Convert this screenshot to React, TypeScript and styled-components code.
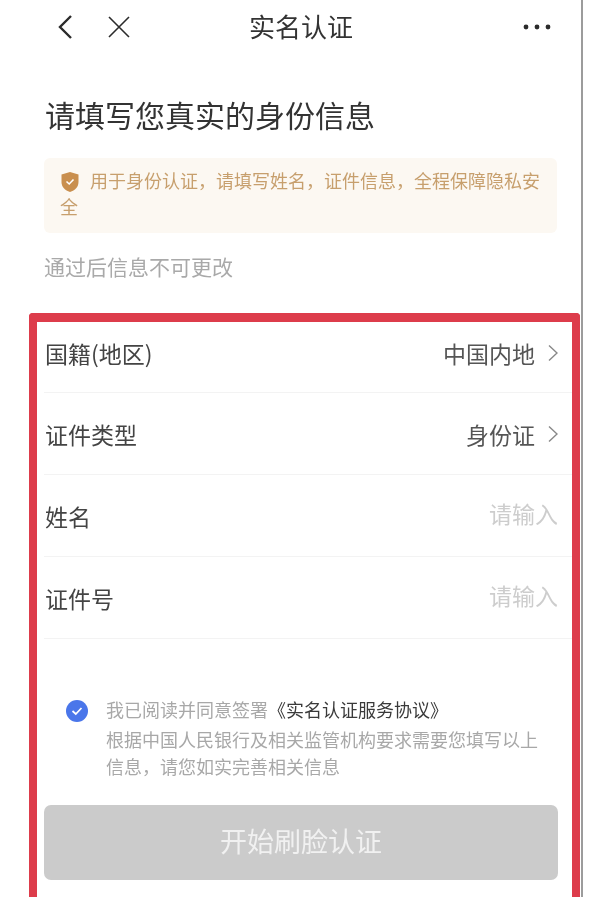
import React from "react";
import styled, { createGlobalStyle } from "styled-components";

const Global = createGlobalStyle`
  html, body { margin: 0; padding: 0; height: 897px; overflow: hidden; background: #fff; }
  body { font-family: "Noto Sans CJK SC", "Noto Sans", sans-serif; }
  * { box-sizing: border-box; }
`;

const Page = styled.div`
  width: 583px;
  height: 897px;
  overflow: hidden;
  border-right: 2px solid #9c9c9c;
  background: #fff;
  filter: blur(0.45px);
`;

const Nav = styled.header`
  height: 54px;
  display: grid;
  grid-template-columns: 194px 104px 1fr;
  align-items: center;
  padding: 0 30px 0 55px;
  color: #2b2b2b;
`;

const NavLeft = styled.div`
  display: flex;
  align-items: center;
  gap: 30px;
`;

const NavRight = styled.div`
  display: flex;
  justify-content: flex-end;
`;

const NavTitle = styled.h1`
  margin: -2px 0 0;
  font-size: 26px;
  line-height: 54px;
  font-weight: 400;
  white-space: nowrap;
  color: #333;
`;

const Heading = styled.h2`
  margin: 34px 0 0 45px;
  font-size: 30px;
  line-height: 52px;
  font-weight: 400;
  color: #333;
`;

const Notice = styled.div`
  margin: 18px 24px 0 44px;
  height: 75px;
  padding: 9px 16px;
  background: #fcf8f2;
  border-radius: 6px;
  font-size: 18px;
  line-height: 26px;
  color: #c79f6d;
`;

const ShieldIcon = styled.svg`
  width: 20px;
  height: 22px;
  margin-right: 10px;
  vertical-align: -5px;
`;

const Hint = styled.p`
  margin: 16px 0 0 44px;
  font-size: 21px;
  line-height: 34px;
  color: #a9a9a9;
`;

const Form = styled.section`
  margin: 30px 0 0 29px;
  width: 551px;
  height: 640px;
  border: solid #dd3c4b;
  border-width: 9px 8px 0 8px;
  border-radius: 4px 4px 0 0;
  padding-left: 7px;
`;

const Row = styled.div`
  height: 82px;
  display: flex;
  align-items: center;
  justify-content: space-between;
  padding: 0 14px 0 1px;
  border-bottom: 1px solid #f3f3f3;
  font-size: 23px;
  color: #444;
  &:first-child {
    height: 71px;
    padding-bottom: 8px;
  }
`;

const RowValue = styled.span`
  display: flex;
  align-items: center;
  gap: 13px;
  color: #555;
`;

const Placeholder = styled.span`
  color: #cdcdcd;
  margin-top: -5px;
`;

const Agreement = styled.div`
  display: flex;
  margin: 57px 30px 0 22px;
  gap: 18px;
`;

const CheckIcon = styled.svg`
  flex: none;
  width: 22px;
  height: 22px;
  margin-top: 4px;
`;

const AgreementText = styled.div`
  font-size: 18px;
  line-height: 27px;
  color: #a8a8a8;
`;

const AgreementLine = styled.div`
  margin-bottom: 3px;
`;

const Strong = styled.span`
  color: #3a3a3a;
`;

const SubmitButton = styled.button`
  display: block;
  width: 514px;
  height: 75px;
  margin: 25px 0 0 0;
  padding: 0 0 4px;
  border: 0;
  border-radius: 7px;
  background: #cbcbcb;
  color: #f1f1f1;
  font: inherit;
  font-size: 27px;
`;

const Chevron = () => (
  <svg width="10" height="18" viewBox="0 0 10 18" fill="none" stroke="#888" strokeWidth="1.4">
    <path d="M1 1.500 9 9 1 16.500" />
  </svg>
);

export default function App() {
  return (
    <Page>
      <Global />
      <Nav>
        <NavLeft>
          <svg width="22" height="26" viewBox="0 0 22 26" fill="none" stroke="#2b2b2b" strokeWidth="2.4">
            <path d="M16 2 5 13l11 11" />
          </svg>
          <svg width="24" height="24" viewBox="0 0 24 24" fill="none" stroke="#2b2b2b" strokeWidth="1.6">
            <path d="M2 2l20 20M22 2 2 22" />
          </svg>
        </NavLeft>
        <NavTitle>实名认证</NavTitle>
        <NavRight>
          <svg width="28" height="6" viewBox="0 0 28 6" fill="#2b2b2b">
            <circle cx="3" cy="3" r="2.4" />
            <circle cx="14" cy="3" r="2.4" />
            <circle cx="25" cy="3" r="2.4" />
          </svg>
        </NavRight>
      </Nav>
      <Heading>请填写您真实的身份信息</Heading>
      <Notice>
        <ShieldIcon viewBox="0 0 20 22">
          <path d="M10 1 18.500 3.500V11c0 5-3.500 8.500-8.500 10C5 19.500 1.500 16 1.500 11V3.500Z" fill="#c98f4e" />
          <path d="M6.500 10.500 9.200 13l4.300-4.500" fill="none" stroke="#fff" strokeWidth="1.6" />
        </ShieldIcon>
        用于身份认证，请填写姓名，证件信息，全程保障隐私安全
      </Notice>
      <Hint>通过后信息不可更改</Hint>
      <Form>
        <Row>
          国籍(地区)
          <RowValue>中国内地<Chevron /></RowValue>
        </Row>
        <Row>
          证件类型
          <RowValue>身份证<Chevron /></RowValue>
        </Row>
        <Row>
          姓名
          <Placeholder>请输入</Placeholder>
        </Row>
        <Row>
          证件号
          <Placeholder>请输入</Placeholder>
        </Row>
        <Agreement>
          <CheckIcon viewBox="0 0 22 22">
            <circle cx="11" cy="11" r="11" fill="#4a76ea" />
            <path d="M6.500 11 9.800 14l5.700-6" fill="none" stroke="#fff" strokeWidth="1.7" />
          </CheckIcon>
          <AgreementText>
            <AgreementLine>我已阅读并同意签署<Strong>《实名认证服务协议》</Strong></AgreementLine>
            根据中国人民银行及相关监管机构要求需要您填写以上信息，请您如实完善相关信息
          </AgreementText>
        </Agreement>
        <SubmitButton>开始刷脸认证</SubmitButton>
      </Form>
    </Page>
  );
}
